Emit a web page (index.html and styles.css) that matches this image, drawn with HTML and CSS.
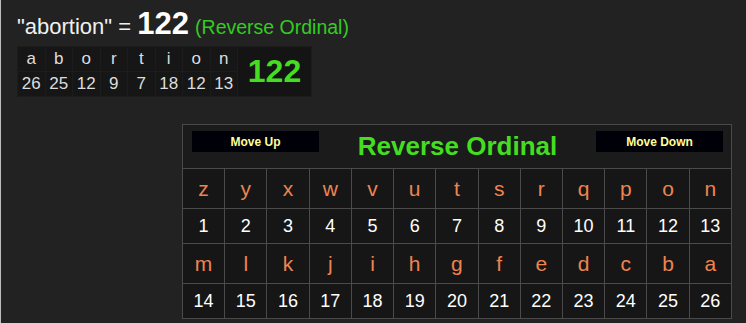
FILE: index.html
```html
<!DOCTYPE html>
<html>
<head>
<meta charset="utf-8">
<link rel="stylesheet" href="styles.css">
</head>
<body>
<div class="page">
  <div class="title">"abortion" = <b class="total">122</b> <span class="cipher">(Reverse Ordinal)</span></div>
  <table class="word">
    <tr>
      <td>a</td><td>b</td><td>o</td><td>r</td><td>t</td><td>i</td><td>o</td><td>n</td>
      <td class="sum" rowspan="2">122</td>
    </tr>
    <tr>
      <td>26</td><td>25</td><td>12</td><td>9</td><td>7</td><td>18</td><td>12</td><td>13</td>
    </tr>
  </table>
  <div class="chart-wrap">
    <table class="chart">
      <tr class="head">
        <td colspan="13">
          <div class="head-bar">
            <button class="move">Move Up</button>
            <span class="chart-title">Reverse Ordinal</span>
            <button class="move">Move Down</button>
          </div>
        </td>
      </tr>
      <tr class="letters">
        <td>z</td><td>y</td><td>x</td><td>w</td><td>v</td><td>u</td><td>t</td><td>s</td><td>r</td><td>q</td><td>p</td><td>o</td><td>n</td>
      </tr>
      <tr class="nums">
        <td>1</td><td>2</td><td>3</td><td>4</td><td>5</td><td>6</td><td>7</td><td>8</td><td>9</td><td>10</td><td>11</td><td>12</td><td>13</td>
      </tr>
      <tr class="letters">
        <td>m</td><td>l</td><td>k</td><td>j</td><td>i</td><td>h</td><td>g</td><td>f</td><td>e</td><td>d</td><td>c</td><td>b</td><td>a</td>
      </tr>
      <tr class="nums">
        <td>14</td><td>15</td><td>16</td><td>17</td><td>18</td><td>19</td><td>20</td><td>21</td><td>22</td><td>23</td><td>24</td><td>25</td><td>26</td>
      </tr>
    </table>
  </div>
</div>
</body>
</html>
```

FILE: styles.css
```css
html, body {
  margin: 0;
  padding: 0;
  background: #222222;
  height: 100%;
}
body {
  font-family: "Liberation Sans", Arial, sans-serif;
  color: #eeeeee;
  border-left: 1px solid #bdbdbd;
  box-sizing: border-box;
}
.page {
  padding: 8px 0 0 16px;
}
.title {
  font-size: 22px;
  line-height: 31px;
  color: #f0f0f0;
  white-space: nowrap;
}
.total {
  font-size: 31px;
  font-weight: bold;
  color: #ffffff;
}
.cipher {
  font-size: 19.5px;
  color: #33cc22;
}
.word {
  margin-top: 3px;
  border-collapse: separate;
  border-spacing: 1px;
  background: #1c1c1c;
}
.word td {
  background: #161616;
  color: #dddddd;
  font-size: 17px;
  text-align: center;
  width: 26.5px;
  height: 24px;
  padding: 0;
}
.word td.sum {
  width: 73px;
  background: #141414;
  color: #44dd22;
  font-size: 32px;
  font-weight: bold;
}
.chart-wrap {
  padding: 27px 0 0 165px;
}
.chart {
  width: 550px;
  border-collapse: collapse;
  border: 1px solid #4a4a4a;
  table-layout: fixed;
}
.chart td {
  border: 1px solid #4a4a4a;
  background: #161616;
  text-align: center;
  padding: 0;
}
.chart .head td {
  background: #1b1b1b;
  height: 43px;
  vertical-align: top;
}
.head-bar {
  display: flex;
  align-items: flex-start;
  justify-content: space-between;
  padding: 6px 8px 0 9px;
}
.move {
  width: 127px;
  height: 21px;
  background: #000008;
  border: none;
  color: #ffff99;
  font-family: "Liberation Sans", Arial, sans-serif;
  font-weight: bold;
  font-size: 12px;
  padding: 0;
}
.chart-title {
  color: #44dd22;
  font-size: 26px;
  font-weight: bold;
  line-height: 30px;
}
.letters td {
  height: 39px;
  color: #ee8450;
  font-size: 21px;
}
.nums td {
  height: 34px;
  color: #ffffff;
  font-size: 18px;
}
```
